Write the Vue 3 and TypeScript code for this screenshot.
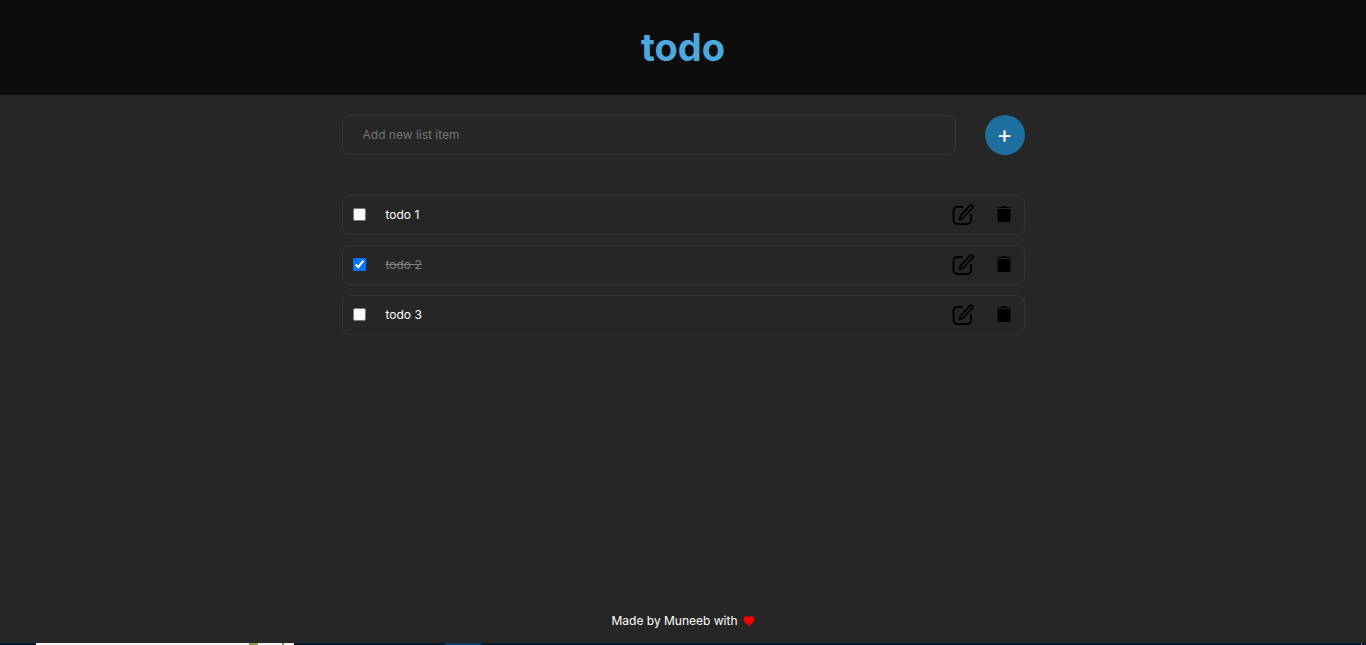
<script setup lang="ts">
import { ref } from 'vue'

interface Todo {
  id: number
  text: string
  done: boolean
}

const draft = ref('')
const todos = ref<Todo[]>([
  { id: 1, text: 'todo 1', done: false },
  { id: 2, text: 'todo 2', done: true },
  { id: 3, text: 'todo 3', done: false },
])

function addTodo() {
  const text = draft.value.trim()
  if (!text) return
  todos.value.push({ id: Date.now(), text, done: false })
  draft.value = ''
}

function removeTodo(id: number) {
  todos.value = todos.value.filter((todo) => todo.id !== id)
}
</script>

<template>
  <div class="page">
    <header class="header">
      <h1 class="title">todo</h1>
    </header>
    <main class="content">
      <form class="add-form" @submit.prevent="addTodo">
        <input
          v-model="draft"
          class="add-input"
          type="text"
          placeholder="Add new list item"
          aria-label="Add new list item"
        />
        <button class="add-button" type="submit" aria-label="Add">+</button>
      </form>
      <ul class="list">
        <li v-for="todo in todos" :key="todo.id" class="item">
          <input :id="`todo-${todo.id}`" v-model="todo.done" class="check" type="checkbox" />
          <label class="text" :class="{ done: todo.done }" :for="`todo-${todo.id}`">{{ todo.text }}</label>
          <button class="icon-button" type="button" aria-label="Edit">
            <svg width="24" height="24" viewBox="0 0 24 24" fill="none" stroke="#000" stroke-width="1.8" stroke-linecap="round" stroke-linejoin="round">
              <path d="M11 5H6a3.500 3.500 0 0 0-3.500 3.500v10A3.500 3.500 0 0 0 6 22h10.500a3.500 3.500 0 0 0 3.500-3.500V13" />
              <path d="M18.900 3.600a1.700 1.700 0 0 1 2.500 2.400l-9.400 10-3.500 1.600 1.200-3.900z" />
            </svg>
          </button>
          <button class="icon-button" type="button" aria-label="Delete" @click="removeTodo(todo.id)">
            <svg width="24" height="24" viewBox="0 0 24 24" fill="#000">
              <path d="M5 5h4.500l1-1h3l1 1H19v1H5z" />
              <path d="M5.500 7h13v11.500a1.500 1.500 0 0 1-1.500 1.500H7a1.500 1.500 0 0 1-1.500-1.500z" />
            </svg>
          </button>
        </li>
      </ul>
    </main>
    <footer class="footer">
      <span>Made by Muneeb with</span>
      <svg class="heart" width="12" height="10" viewBox="0 0 12 10" role="img" aria-label="love">
        <path d="M6 10C2.500 7 .5 5.500.5 3a2.900 2.900 0 0 1 5.500-1.300A2.900 2.900 0 0 1 11.500 3C11.500 5.500 9.500 7 6 10z" fill="#f00" />
      </svg>
    </footer>
    <div class="taskbar" aria-hidden="true">
      <span class="window"><i class="leaf"></i><i class="stem"></i></span>
      <span class="active"></span>
      <span class="edge"></span>
    </div>
  </div>
</template>

<style>
body {
  margin: 0;
  background: #262626;
}
</style>

<style scoped>
.page {
  display: flex;
  flex-direction: column;
  min-height: 100vh;
  background: #262626;
  color: #fff;
  font-family: Inter, "Liberation Sans", sans-serif;
  font-size: 12px;
}

.header {
  display: flex;
  justify-content: center;
  padding: 24px 0;
  background: #0d0d0d;
}

.title {
  margin: 0;
  color: #4ea8de;
  font-size: 38px;
  font-weight: 700;
  line-height: 47px;
}

.content {
  flex: 1;
  width: 50%;
  margin: 0 auto;
  padding-top: 20px;
}

.add-form {
  display: flex;
  justify-content: space-between;
}

.add-input {
  box-sizing: border-box;
  width: 90%;
  height: 40px;
  padding: 0 20px 2px;
  border: 1px solid #333;
  border-radius: 8px;
  outline: none;
  background: transparent;
  color: #fff;
  font: inherit;
}

.add-input::placeholder {
  color: #757575;
}

.add-button {
  width: 40px;
  height: 40px;
  padding: 0 0 2px;
  border: 0;
  border-radius: 50%;
  background: #1e6f9f;
  color: #fff;
  font: inherit;
  font-size: 24px;
  cursor: pointer;
}

.list {
  display: flex;
  flex-direction: column;
  gap: 10px;
  margin: 40px 0 0;
  padding: 0;
  list-style: none;
}

.item {
  box-sizing: border-box;
  display: flex;
  align-items: center;
  height: 40px;
  padding: 0 8px 2px 10px;
  border: 1px solid #333;
  border-radius: 8px;
}

.check {
  width: 13px;
  height: 13px;
  margin: 0 20px 0 0;
}

.text {
  flex: 1;
  padding-top: 2px;
  line-height: 16px;
}

.text.done {
  color: #808080;
  text-decoration: line-through;
}

.icon-button {
  width: 24px;
  height: 24px;
  padding: 0;
  border: 0;
  background: none;
  cursor: pointer;
}

.icon-button + .icon-button {
  margin-left: 17px;
}

.icon-button svg {
  display: block;
}

.footer {
  display: flex;
  align-items: center;
  justify-content: center;
  gap: 5px;
  padding-bottom: 14px;
  line-height: 16px;
}

.taskbar {
  display: flex;
  height: 2px;
  background: #05192a;
}

.window {
  display: flex;
  width: 258px;
  margin-left: 36px;
  background: #f4f4f4;
}

.leaf {
  width: 9px;
  margin-left: 213px;
  background: #8f9653;
}

.stem {
  width: 2px;
  margin-left: 24px;
  background: #769221;
}

.active {
  width: 36px;
  margin-left: 151px;
  background: #063e6e;
}

.edge {
  width: 1px;
  margin: 0 4px 0 auto;
  background: #6e7c85;
}
</style>
